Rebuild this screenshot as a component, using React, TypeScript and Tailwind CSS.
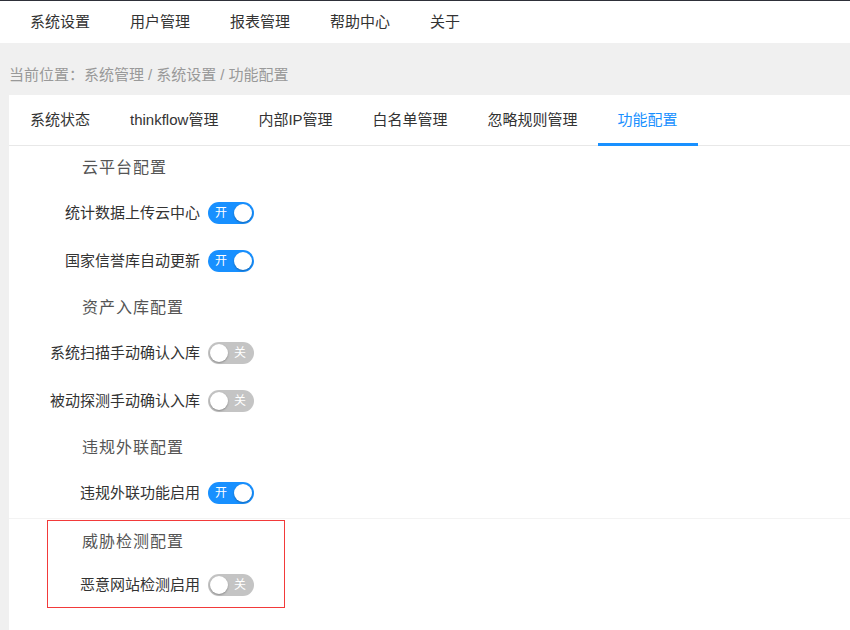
import { useState } from "react";

const font = { fontFamily: '"Liberation Sans", "Noto Sans CJK SC", sans-serif' };

function Switch({ on, onToggle }: { on: boolean; onToggle: () => void }) {
  return (
    <button
      onClick={onToggle}
      className={`relative h-[22px] w-[46px] rounded-full ${on ? "bg-[#1890ff]" : "bg-[#c4c4c4]"}`}
    >
      <span
        className={`absolute top-1/2 -translate-y-1/2 text-[12px] leading-none text-white ${on ? "left-[7px]" : "right-[8px]"}`}
      >
        {on ? "开" : "关"}
      </span>
      <span
        className={`absolute top-[2px] h-[18px] w-[18px] rounded-full bg-white shadow-[0_1px_2px_rgba(0,0,0,0.3)] ${on ? "right-[2px]" : "left-[2px]"}`}
      />
    </button>
  );
}

function Row({ label, on, onToggle, labelWidth }: { label: string; on: boolean; onToggle: () => void; labelWidth: string }) {
  return (
    <div className="flex h-[48px] items-center pb-[2px]">
      <div className={`${labelWidth} pr-2 text-right text-[15px] text-[#333]`}>{label}</div>
      <Switch on={on} onToggle={onToggle} />
    </div>
  );
}

function Title({ text, className = "" }: { text: string; className?: string }) {
  return <div className={`flex h-[44px] items-center text-[16px] tracking-[1px] text-[#555] ${className}`}>{text}</div>;
}

export default function App() {
  const [state, setState] = useState<Record<string, boolean>>({
    upload: true,
    credit: true,
    scan: false,
    passive: false,
    outreach: true,
    malicious: false,
  });
  const toggle = (k: string) => setState({ ...state, [k]: !state[k] });

  const nav = ["系统设置", "用户管理", "报表管理", "帮助中心", "关于"];
  const tabs = ["系统状态", "thinkflow管理", "内部IP管理", "白名单管理", "忽略规则管理", "功能配置"];

  return (
    <div style={font} className="flex h-[630px] w-[850px] flex-col overflow-hidden bg-[#f0f0f0]">
      <div className="h-px bg-[#2e3039]" />
      <div className="flex h-[42px] items-center bg-white pl-[10px]">
        {nav.map((n) => (
          <div key={n} className="px-5 text-[15px] text-[#333]">{n}</div>
        ))}
      </div>

      <div className="flex h-[52px] items-center pl-[9px] pt-3 text-[15px] text-[#999]">
        当前位置：系统管理<span className="mx-[4px]">/</span>系统设置<span className="mx-[4px]">/</span>功能配置
      </div>

      <div className="ml-[9px] flex-1 bg-white">
        <div className="flex h-[51px] border-b border-[#e8e8e8] pl-px">
          {tabs.map((t) => {
            const active = t === "功能配置";
            return (
              <div
                key={t}
                className={`-mb-px flex items-center px-5 pt-[2px] text-[15px] ${active ? "border-b-[3px] border-[#1890ff] text-[#1890ff]" : "border-b-[3px] border-transparent text-[#333]"}`}
              >
                {t}
              </div>
            );
          })}
        </div>

        <div>
          <Title text="云平台配置" className="pl-[73px]" />
          <Row label="统计数据上传云中心" labelWidth="w-[199px]" on={state.upload} onToggle={() => toggle("upload")} />
          <Row label="国家信誉库自动更新" labelWidth="w-[199px]" on={state.credit} onToggle={() => toggle("credit")} />
          <Title text="资产入库配置" className="pl-[73px]" />
          <Row label="系统扫描手动确认入库" labelWidth="w-[199px]" on={state.scan} onToggle={() => toggle("scan")} />
          <Row label="被动探测手动确认入库" labelWidth="w-[199px]" on={state.passive} onToggle={() => toggle("passive")} />
          <Title text="违规外联配置" className="pl-[73px]" />
          <Row label="违规外联功能启用" labelWidth="w-[199px]" on={state.outreach} onToggle={() => toggle("outreach")} />
          <div className="border-t border-[#f3f3f3]" />
          <div className="ml-[38px] mt-px w-[238px] border border-[#f23a3a]">
            <div className="flex h-[42px] items-center pl-[34px] text-[16px] tracking-[1px] text-[#555]">威胁检测配置</div>
            <div className="flex h-[44px] items-center">
              <div className="w-[160px] pr-2 text-right text-[15px] text-[#333]">恶意网站检测启用</div>
              <Switch on={state.malicious} onToggle={() => toggle("malicious")} />
            </div>
          </div>
        </div>
      </div>
    </div>
  );
}
